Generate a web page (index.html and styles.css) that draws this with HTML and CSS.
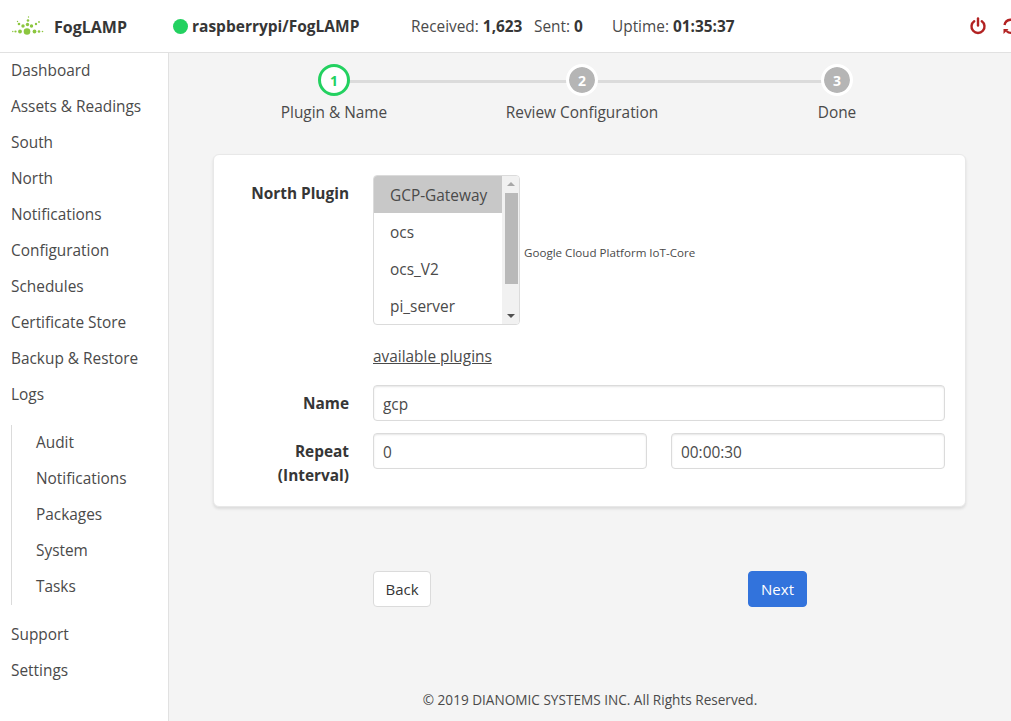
FILE: index.html
```html
<!DOCTYPE html>
<html>
<head>
<title>FogLAMP</title>
<link rel="stylesheet" href="styles.css">
</head>
<body>
<header class="navbar">
  <div class="brand">
    <svg class="logo" width="34" height="20" viewBox="0 0 34 20">
      <g fill="#8cc63f">
        <circle cx="15" cy="15.500" r="3.300"/>
        <circle cx="8" cy="15.500" r="1.900"/>
        <circle cx="22.500" cy="15.500" r="1.900"/>
        <circle cx="3.500" cy="15.500" r="1.100"/>
        <circle cx="0.800" cy="15.500" r="0.700"/>
        <circle cx="27" cy="15.500" r="1.300"/>
        <circle cx="30.500" cy="15.500" r="0.800"/>
        <circle cx="11" cy="10" r="1.700"/>
        <circle cx="19.500" cy="10" r="1.700"/>
        <circle cx="15.500" cy="8.500" r="1.700"/>
        <circle cx="7" cy="8" r="1.300"/>
        <circle cx="24" cy="8" r="1.200"/>
        <circle cx="16" cy="4.500" r="1.300"/>
        <circle cx="5.500" cy="5.500" r="0.700"/>
        <circle cx="27" cy="6" r="0.900"/>
        <circle cx="16.500" cy="1" r="0.700"/>
      </g>
    </svg>
    <strong>FogLAMP</strong>
  </div>
  <div class="service">
    <span class="dot"></span>
    <strong>raspberrypi/FogLAMP</strong>
  </div>
  <div class="stats">
    <span class="stat-received">Received: <b>1,623</b></span>
    <span class="stat-sent">Sent: <b>0</b></span>
    <span>Uptime: <b>01:35:37</b></span>
  </div>
  <div class="nav-icons">
    <svg width="18" height="18" viewBox="0 0 18 18" fill="none" stroke="#b22222" stroke-width="2.400" stroke-linecap="round">
      <path d="M5.200 4.200a6.500 6.500 0 1 0 7.600 0"/>
      <path d="M9 1.500v7"/>
    </svg>
    <svg width="18" height="18" viewBox="0 0 18 18" fill="none" stroke="#b22222" stroke-width="2.400">
      <path d="M2.500 8a6.500 6.500 0 0 1 12.500-1"/>
      <path d="M15.500 10a6.500 6.500 0 0 1-11 4"/>
      <path d="M1.500 17v-5h5z" fill="#b22222" stroke="none"/>
      <path d="M16.500 1v5h-5z" fill="#b22222" stroke="none"/>
    </svg>
  </div>
</header>

<div class="layout">
  <aside class="sidebar">
    <ul class="menu">
      <li>Dashboard</li>
      <li>Assets &amp; Readings</li>
      <li>South</li>
      <li>North</li>
      <li>Notifications</li>
      <li>Configuration</li>
      <li>Schedules</li>
      <li>Certificate Store</li>
      <li>Backup &amp; Restore</li>
      <li>Logs</li>
    </ul>
    <ul class="menu submenu">
      <li>Audit</li>
      <li>Notifications</li>
      <li>Packages</li>
      <li>System</li>
      <li>Tasks</li>
    </ul>
    <ul class="menu">
      <li>Support</li>
      <li>Settings</li>
    </ul>
  </aside>

  <main class="content">
    <div class="stepper">
      <div class="step step-1">
        <span class="bubble active">1</span>
        <span class="step-label">Plugin &amp; Name</span>
      </div>
      <div class="step step-2">
        <span class="bubble">2</span>
        <span class="step-label">Review Configuration</span>
      </div>
      <div class="step step-3">
        <span class="bubble">3</span>
        <span class="step-label">Done</span>
      </div>
    </div>

    <section class="card">
      <div class="row row-plugin">
        <label class="field-label">North Plugin</label>
        <div class="plugin-field">
          <div class="listbox">
            <ul class="options">
              <li class="selected">GCP-Gateway</li>
              <li>ocs</li>
              <li>ocs_V2</li>
              <li>pi_server</li>
            </ul>
            <div class="scrollbar">
              <span class="arrow-up"></span>
              <span class="thumb"></span>
              <span class="arrow-down"></span>
            </div>
          </div>
          <span class="plugin-desc">Google Cloud Platform IoT-Core</span>
        </div>
      </div>
      <div class="row row-link">
        <a class="plugins-link" href="#">available plugins</a>
      </div>
      <div class="row row-name">
        <label class="field-label">Name</label>
        <input class="input" type="text" value="gcp">
      </div>
      <div class="row row-repeat">
        <label class="field-label">Repeat<br>(Interval)</label>
        <div class="inputs">
          <input class="input" type="text" value="0">
          <input class="input" type="text" value="00:00:30">
        </div>
      </div>
    </section>

    <div class="actions">
      <button class="btn btn-back" type="button">Back</button>
      <button class="btn btn-primary" type="button">Next</button>
    </div>

    <footer class="footer">© 2019 DIANOMIC SYSTEMS INC. All Rights Reserved.</footer>
  </main>
</div>
</body>
</html>
```

FILE: styles.css
```css
html, body {margin:0; padding:0; height:100%; overflow:hidden; background:#fff; color:#4a4a4a; font:15.4px/1.5 "Open Sans", "Noto Sans", Arial, sans-serif;}
ul {margin:0; padding:0; list-style:none;}

.navbar {display:flex; align-items:center; height:52px; box-sizing:content-box; overflow:hidden; border-bottom:1px solid #e1e1e1;}
.navbar strong {padding-top:2px; color:#363636; font-weight:700;}
.brand {display:flex; align-items:center; width:173px; flex:none; font-size:16px;}
.logo {margin:0 8px 0 12px; flex:none;}
.service {display:flex; align-items:center; width:238px; flex:none; font-size:15.5px;}
.dot {width:15px; height:15px; margin-right:4px; border-radius:50%; background:#23d160;}
.stats {display:flex; flex:none; width:558px; padding-top:2px; white-space:nowrap;}
.stats b {color:#363636;}
.stat-received {width:123px;}
.stat-sent {width:78px;}
.nav-icons {display:flex; gap:15px; flex:none;}
.nav-icons svg {flex:none;}

.layout {display:flex; height:668px;}
.sidebar {width:168px; flex:none; border-right:1px solid #e1e1e1;}
.menu li {height:36px; line-height:36px; padding-left:11px;}
.submenu {margin:12px 0 12px 11px; border-left:1px solid #dbdbdb;}
.submenu li {padding-left:24px;}

.content {flex:1; display:flex; flex-direction:column; min-width:0; background:#f4f4f4;}

.stepper {position:relative; height:101px;}
.stepper::before {content:""; position:absolute; left:165px; top:27px; width:503px; height:3px; background:#dbdbdb;}
.step {position:absolute; top:11px; display:flex; flex-direction:column; align-items:center; width:200px; margin-left:-100px;}
.step-1 {left:165px;}
.step-2 {left:413px;}
.step-3 {left:668px;}
.bubble {display:flex; align-items:center; justify-content:center; box-sizing:border-box; width:32px; height:32px; border:3px solid #fff; border-radius:50%; background:#b5b5b5; background-clip:padding-box; color:#fff; font-size:14px; font-weight:700;}
.bubble.active {border-color:#23d160; background:#fff; color:#23d160;}
.step-label {margin-top:6px; line-height:22px;}

.card {box-sizing:border-box; width:753px; height:353px; margin-left:44px; padding:20px 20px 0 0; background:#fff; border:1px solid #e8e8e8; border-radius:6px; box-shadow:0 2px 3px rgba(10,10,10,.1);}
.row {display:flex; align-items:flex-start;}
.field-label {width:135px; flex:none; margin-right:24px; text-align:right; color:#363636; font-weight:700; line-height:24px;}
.row-plugin .field-label {margin-top:7px;}
.plugin-field {display:flex; align-items:center;}
.listbox {display:flex; box-sizing:border-box; width:147px; height:150px; border:1px solid #dbdbdb; border-radius:4px; overflow:hidden; background:#fff;}
.options {flex:1;}
.options li {height:37px; line-height:39px; padding-left:16px;}
.options .selected {background:#c8c8c8;}
.scrollbar {position:relative; width:17px; flex:none; background:#f1f1f1;}
.thumb {position:absolute; left:3px; right:1px; top:17px; height:91px; background:#b9b9b9;}
.arrow-up, .arrow-down {position:absolute; left:5px; width:0; height:0; border-left:4px solid transparent; border-right:4px solid transparent;}
.arrow-up {top:6px; border-bottom:4px solid #a8a8a8;}
.arrow-down {bottom:6px; border-top:4px solid #505050;}
.plugin-desc {margin:6px 0 0 4px; font-size:11.6px; white-space:nowrap;}
.row-link {box-sizing:border-box; height:60px; align-items:center; padding:3px 0 0 159px;}
.plugins-link {color:#4a4a4a; text-decoration:underline;}
.row-name {margin-bottom:12px;}
.row-name .field-label {margin-top:7px;}
.row-repeat .field-label {margin-top:7px;}
.inputs {flex:1; display:flex; gap:24px; min-width:0;}
.input {flex:1; min-width:0; width:100%; box-sizing:border-box; height:36px; padding:3px 9px 0; border:1px solid #dbdbdb; border-radius:4px; background:#fff; color:#4a4a4a; font:inherit; box-shadow:inset 0 1px 2px rgba(10,10,10,.1);}

.actions {display:flex; justify-content:space-between; width:434px; margin:64px 0 0 204px;}
.btn {box-sizing:border-box; height:36px; padding:0 12px; border:1px solid #dbdbdb; border-radius:4px; background:#fff; color:#363636; font:inherit; font-size:15px;}
.btn-back {padding:0 11.5px;}
.btn-primary {border-color:#3273dc; background:#3273dc; color:#fff;}

.footer {margin-top:auto; padding-bottom:10px; text-align:center; font-size:13.6px; line-height:22px;}
```
